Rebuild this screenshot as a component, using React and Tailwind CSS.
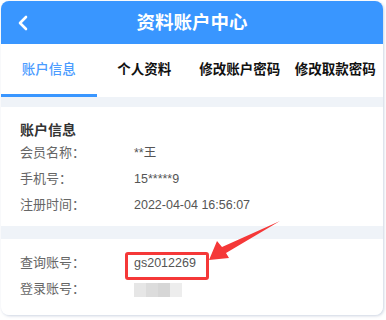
import { useState } from "react";

const tabs = ["账户信息", "个人资料", "修改账户密码", "修改取款密码"];

function Row({ label, children }) {
  return (
    <div className="flex h-[26px] items-center text-[13px] text-[#666]">
      <span className="w-[114px]">{label}</span>
      <span className="text-[12.5px] text-[#555]">{children}</span>
    </div>
  );
}

function App() {
  let [active, setActive] = useState(0);

  return (
    <div
      className="w-[386px] h-[320px] bg-white overflow-hidden"
      style={{ fontFamily: '"Liberation Sans", "Noto Sans CJK SC", sans-serif' }}
    >
      <div className="relative ml-px mt-px w-[382px] rounded-lg overflow-hidden bg-[#eff3f8] shadow-[1px_1px_3px_rgba(110,130,170,0.35)]">
        <div className="relative h-[43px] bg-[#3996ff] flex items-center justify-center">
          <svg className="absolute left-[16px] top-[14px]" width="12" height="16" viewBox="0 0 12 16">
            <path d="M9 2 L3 8 L9 14" fill="none" stroke="white" strokeWidth="2.6" strokeLinecap="round" strokeLinejoin="round" />
          </svg>
          <span className="text-white text-[18.5px] font-bold">资料账户中心</span>
        </div>

        <div className="flex h-[53px] bg-white">
          {tabs.map((t, i) => (
            <div
              key={t}
              onClick={() => setActive(i)}
              className={
                "relative flex-1 flex items-center justify-center text-[13.5px] " +
                (i === active ? "text-[#4b9cff] font-medium" : "text-[#111] font-bold")
              }
            >
              {t}
              {i === active && <div className="absolute left-0 right-0 bottom-0 h-[3px] bg-[#3996ff]" />}
            </div>
          ))}
        </div>

        <div className="mt-[10px] bg-white px-[19px] pt-[13px] pb-[8px]">
          <div className="text-[14px] leading-[20px] font-bold text-[#333]">账户信息</div>
          <Row label="会员名称：">**王</Row>
          <Row label="手机号：">15*****9</Row>
          <Row label="注册时间：">2022-04-04 16:56:07</Row>
        </div>

        <div className="mt-[13px] bg-white px-[19px] pt-[11px] pb-[13px]">
          <Row label="查询账号：">gs2012269</Row>
          <Row label="登录账号：">
            <span className="flex h-[14px] w-[48px] mt-[1px]">
              <span className="flex-1 bg-[#e6e6e6]" />
              <span className="flex-1 bg-[#dcdcdc]" />
              <span className="flex-1 bg-[#d6d6d6]" />
              <span className="flex-1 bg-[#ededed]" />
            </span>
          </Row>
        </div>

        <div className="absolute left-[124px] top-[251px] w-[84px] h-[28px] border-[3px] border-[#f53838] rounded-[3px]" />
        <svg className="absolute left-0 top-0 pointer-events-none" width="382" height="318">
          <polygon points="208,259 216,240 221,246 279,220 225,252 228,257" fill="#f53838" />
        </svg>
      </div>
    </div>
  );
}

export default App;
